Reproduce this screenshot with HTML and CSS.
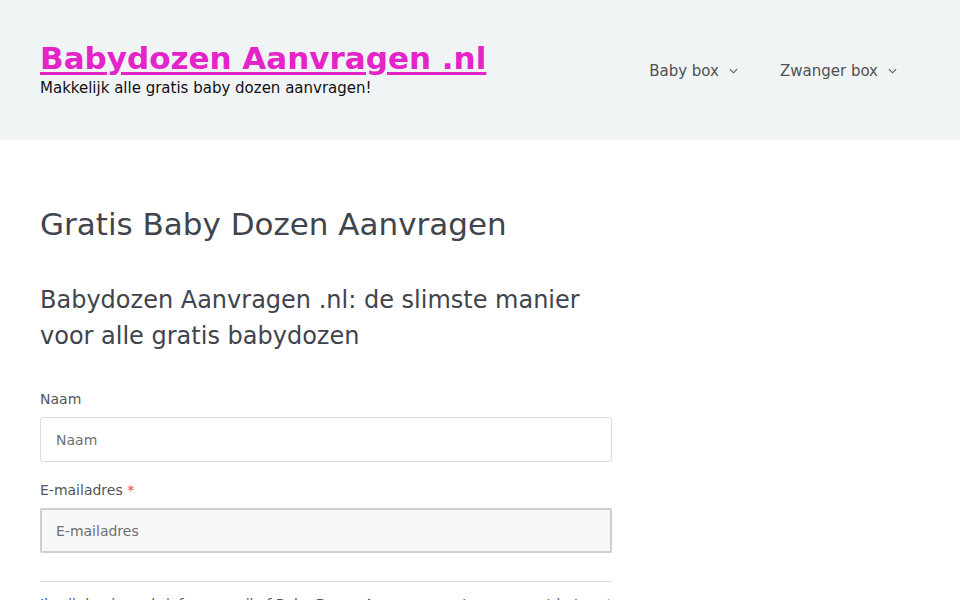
FILE: index.html
```html
<!DOCTYPE html>
<html lang="nl">
<head>
<meta charset="utf-8">
<title>Babydozen Aanvragen .nl</title>
<link rel="stylesheet" href="styles.css">
</head>
<body>
<header class="site-header">
  <div class="header-inner">
    <div class="branding">
      <p class="site-title"><a href="#">Babydozen Aanvragen .nl</a></p>
      <p class="site-description">Makkelijk alle gratis baby dozen aanvragen!</p>
    </div>
    <nav class="main-nav">
      <ul class="menu">
        <li class="menu-item"><a href="#">Baby box<span class="chev"><svg viewBox="0 0 10 6" width="9" height="6"><path d="M1 1l4 4 4-4" fill="none" stroke="currentColor" stroke-width="1.2"/></svg></span></a></li>
        <li class="menu-item"><a href="#">Zwanger box<span class="chev"><svg viewBox="0 0 10 6" width="9" height="6"><path d="M1 1l4 4 4-4" fill="none" stroke="currentColor" stroke-width="1.2"/></svg></span></a></li>
      </ul>
    </nav>
  </div>
</header>
<main class="site-content">
  <article class="content-area">
    <h1 class="entry-title">Gratis Baby Dozen Aanvragen</h1>
    <h2 class="sub-title">Babydozen Aanvragen .nl: de slimste manier voor alle gratis babydozen</h2>
    <form class="signup">
      <div class="field">
        <label class="field-label" for="naam">Naam</label>
        <input class="text-input" id="naam" type="text" placeholder="Naam">
      </div>
      <div class="field">
        <label class="field-label" for="email">E-mailadres <span class="req">*</span></label>
        <input class="text-input text-input--active" id="email" type="email" placeholder="E-mailadres">
      </div>
      <div class="consent">
        <p class="consent-text">Ik wil de nieuwsbrief en e-mail of Baby Dozen Aanvragen ontvangen met het laatste nieuws <span class="req req-end">*</span></p>
      </div>
    </form>
  </article>
</main>
</body>
</html>
```
FILE: styles.css
```css
* { box-sizing: border-box; }
html, body { margin: 0; padding: 0; }
body {
  font-family: "DejaVu Sans", sans-serif;
  color: #3a3f48;
  background: #ffffff;
}
.site-header {
  background: #f0f4f5;
  height: 140px;
}
.header-inner {
  display: flex;
  justify-content: space-between;
  align-items: flex-start;
  padding: 40px 43px 0 40px;
}
.site-title {
  margin: 0;
  font-size: 31px;
  font-weight: bold;
  line-height: 36px;
}
.site-title a {
  color: #e423c8;
  text-decoration: underline;
  text-decoration-thickness: 3px;
  text-underline-offset: 3px;
}
.site-description {
  margin: 2px 0 0;
  font-size: 15px;
  line-height: 20px;
  color: #111;
}
.main-nav { padding-top: 11px; }
.menu {
  list-style: none;
  margin: 0;
  padding: 0;
  display: flex;
}
.menu-item a {
  display: flex;
  align-items: center;
  padding: 0 20px;
  line-height: 40px;
  font-size: 15px;
  color: #515151;
  text-decoration: none;
}
.menu-item:first-child a { padding-left: 18px; padding-right: 22px; }
.chev {
  display: inline-flex;
  margin-left: 10px;
  color: #555;
}
.site-content {
  padding: 62px 40px 0;
}
.content-area { width: 572px; }
.entry-title {
  margin: 0;
  font-size: 31px;
  font-weight: normal;
  line-height: 44px;
  color: #40444c;
}
.sub-title {
  margin: 36px 0 0;
  font-size: 24px;
  font-weight: normal;
  line-height: 36px;
  color: #40444c;
}
.signup { margin-top: 35px; }
.field { margin-bottom: 18px; }
.field-label {
  display: block;
  font-size: 14px;
  line-height: 20px;
  color: #555;
  margin-bottom: 8px;
}
.req { color: #e04c4c; }
.text-input {
  display: block;
  width: 100%;
  height: 45px;
  padding: 0 15px;
  font-family: "DejaVu Sans", sans-serif;
  font-size: 14px;
  color: #555;
  background: #fff;
  border: 1px solid #dcdcdc;
  border-radius: 3px;
}
.text-input::placeholder { color: #6f6f6f; }
.text-input--active {
  background: #f8f8f8;
  border: 2px solid #cfcfcf;
  border-radius: 2px;
  padding: 0 14px;
}
.consent {
  margin-top: 28px;
  border-top: 1px solid #dddddd;
  padding-top: 12px;
}
.consent-text {
  margin: 0;
  font-size: 14px;
  line-height: 20px;
  color: #555;
  display: flex;
  justify-content: space-between;
}
```
